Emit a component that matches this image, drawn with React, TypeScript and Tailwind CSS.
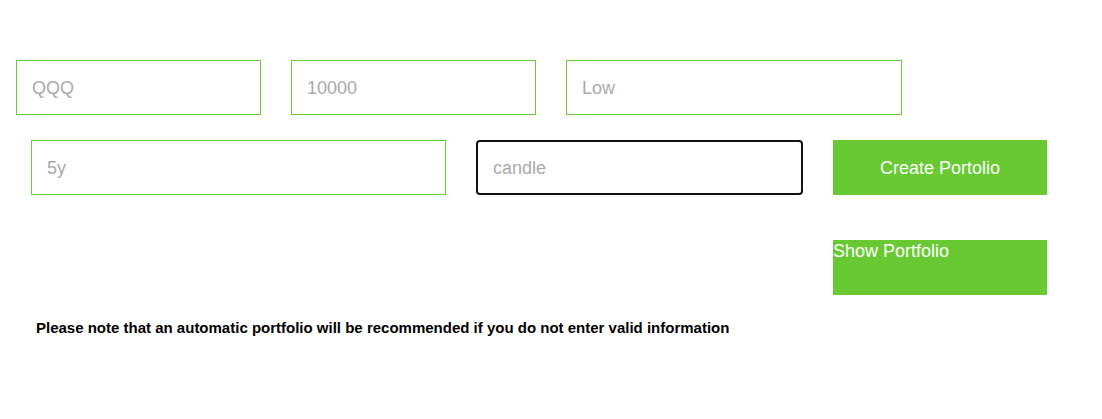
import React from 'react';

const green = 'border border-[#66cc33]';

export default function App() {
  return (
    <div className="min-h-screen bg-white font-['Liberation_Sans',Arial,sans-serif]">
      <div className="flex gap-[30px] pl-[16px] pt-[60px]">
        <input
          placeholder="QQQ"
          className={`${green} h-[55px] w-[245px] px-[15px] pt-[2px] text-[18px] text-black outline-none placeholder:text-[#aaaaaa]`}
        />
        <input
          placeholder="10000"
          className={`${green} h-[55px] w-[245px] px-[15px] pt-[2px] text-[18px] text-black outline-none placeholder:text-[#aaaaaa]`}
        />
        <input
          placeholder="Low"
          className={`${green} h-[55px] w-[336px] px-[15px] pt-[2px] text-[18px] text-black outline-none placeholder:text-[#aaaaaa]`}
        />
      </div>

      <div className="mt-[25px] flex gap-[30px] pl-[31px]">
        <input
          placeholder="5y"
          className={`${green} h-[55px] w-[415px] px-[15px] pt-[2px] text-[18px] text-black outline-none placeholder:text-[#aaaaaa]`}
        />
        <input
          placeholder="candle"
          className="h-[55px] w-[327px] rounded-[4px] border-2 border-[#111111] px-[15px] pt-[2px] text-[18px] text-black outline-none placeholder:text-[#aaaaaa]"
        />
        <button className="h-[55px] w-[214px] bg-[#68c933] pt-[2px] text-[18px] text-white">
          Create Portolio
        </button>
      </div>

      <div className="mt-[45px] flex w-[1047px] justify-end">
        <button className="flex h-[55px] w-[214px] items-start justify-start bg-[#68c933] p-0 pt-[1px] text-left text-[18px] leading-[21px] text-white">
          Show Portfolio
        </button>
      </div>

      <p className="mt-[22px] pl-[36px] text-[15px] font-bold text-black">
        Please note that an automatic portfolio will be recommended if you do not enter valid information
      </p>
    </div>
  );
}
